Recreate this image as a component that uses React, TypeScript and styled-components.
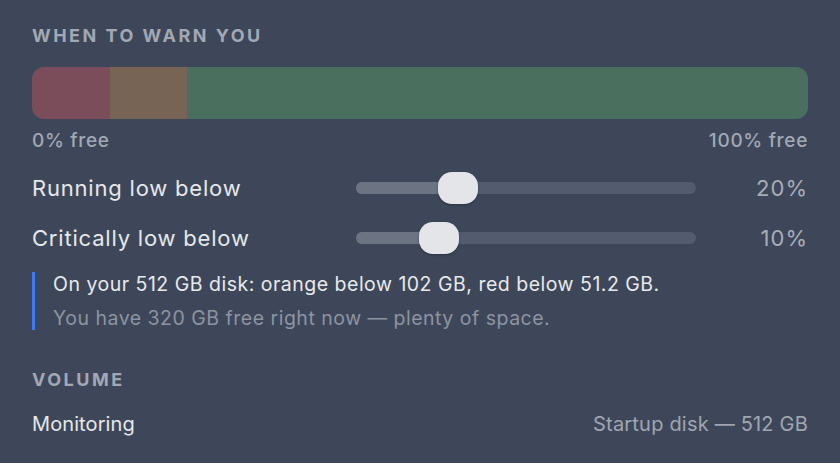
import styled, { createGlobalStyle } from 'styled-components';

const GlobalStyle = createGlobalStyle`
  html, body {
    margin: 0;
    padding: 0;
    background-color: #3e475a;
  }
  body {
    font-family: Inter, "Noto Sans", "Liberation Sans", sans-serif;
    -webkit-font-smoothing: antialiased;
  }
`;

const thresholds = [
  { label: 'Running low below', value: 20, thumbAt: 82 },
  { label: 'Critically low below', value: 10, thumbAt: 63 },
];

function App() {
  return (
    <>
      <GlobalStyle />
      <Panel>
        <SectionTitle>When to warn you</SectionTitle>
        <Meter>
          <Segment color="#7b4d5a" style={{ width: '10%' }} />
          <Segment color="#786455" style={{ width: '10%' }} />
          <Segment color="#4a6f5f" style={{ flex: 1 }} />
        </Meter>
        <Scale>
          <span>0% free</span>
          <span>100% free</span>
        </Scale>

        <Sliders>
          {thresholds.map((t) => (
            <SliderRow key={t.label}>
              <RowLabel>{t.label}</RowLabel>
              <Track>
                <TrackFill style={{ width: t.thumbAt + 20 }} />
                <Thumb style={{ left: t.thumbAt }} />
              </Track>
              <RowValue>{t.value}%</RowValue>
            </SliderRow>
          ))}
        </Sliders>

        <Note>
          <NoteMain>On your 512 GB disk: orange below 102 GB, red below 51.2 GB.</NoteMain>
          <NoteSub>You have 320 GB free right now — plenty of space.</NoteSub>
        </Note>

        <SectionTitle $top={38}>Volume</SectionTitle>
        <InfoRow>
          <InfoLabel>Monitoring</InfoLabel>
          <InfoValue>Startup disk — 512 GB</InfoValue>
        </InfoRow>
      </Panel>
    </>
  );
}

export default App;

const Panel = styled.div`
  width: 840px;
  height: 463px;
  box-sizing: border-box;
  padding: 24px 32px 0 32px;
  background-color: #3e475a;
  overflow: hidden;
`;

const SectionTitle = styled.h2<{ $top?: number }>`
  margin: ${({ $top }) => $top || 0}px 0 0 0;
  font-size: 18px;
  line-height: 24px;
  font-weight: 700;
  letter-spacing: 2.5px;
  text-transform: uppercase;
  color: #a2a8b4;
`;

const Meter = styled.div`
  display: flex;
  height: 52px;
  margin-top: 19px;
  border-radius: 12px;
  overflow: hidden;
`;

const Segment = styled.div<{ color: string }>`
  background-color: ${({ color }) => color};
`;

const Scale = styled.div`
  display: flex;
  justify-content: space-between;
  margin-top: 10px;
  font-size: 19px;
  line-height: 24px;
  font-weight: 500;
  letter-spacing: 0.7px;
  color: #a2a8b4;
`;

const Sliders = styled.div`
  display: flex;
  flex-direction: column;
  margin-top: 10px;
`;

const SliderRow = styled.div`
  display: grid;
  grid-template-columns: 324px 340px 1fr;
  align-items: center;
  height: 50px;
`;

const RowLabel = styled.span`
  font-size: 22px;
  letter-spacing: 0.8px;
  color: #e6e7ea;
`;

const Track = styled.div`
  position: relative;
  height: 12px;
  border-radius: 6px;
  background-color: #535c6e;
`;

const TrackFill = styled.div`
  height: 100%;
  border-radius: 6px;
  background-color: #6c7484;
`;

const Thumb = styled.div`
  position: absolute;
  top: -10px;
  width: 40px;
  height: 32px;
  border-radius: 14px;
  background-color: #e4e5e8;
  box-shadow: 0 1px 3px rgba(0, 0, 0, 0.3);
`;

const RowValue = styled.span`
  text-align: right;
  font-size: 22px;
  letter-spacing: 1px;
  color: #a8adb8;
`;

const Note = styled.div`
  margin-top: 9px;
  padding: 0 0 0 18px;
  border-left: 3px solid #3b7af0;
  display: flex;
  flex-direction: column;
  gap: 10px;
`;

const NoteMain = styled.span`
  font-size: 19.5px;
  line-height: 24px;
  letter-spacing: 0.5px;
  color: #e8e9ec;
`;

const NoteSub = styled.span`
  font-size: 19.5px;
  line-height: 24px;
  letter-spacing: 0.5px;
  color: #8d94a1;
`;

const InfoRow = styled.div`
  display: flex;
  justify-content: space-between;
  align-items: center;
  margin-top: 20px;
`;

const InfoLabel = styled.span`
  font-size: 20px;
  letter-spacing: 0.1px;
  color: #e6e7ea;
`;

const InfoValue = styled.span`
  font-size: 20px;
  letter-spacing: 0.2px;
  color: #a0a6b1;
`;
